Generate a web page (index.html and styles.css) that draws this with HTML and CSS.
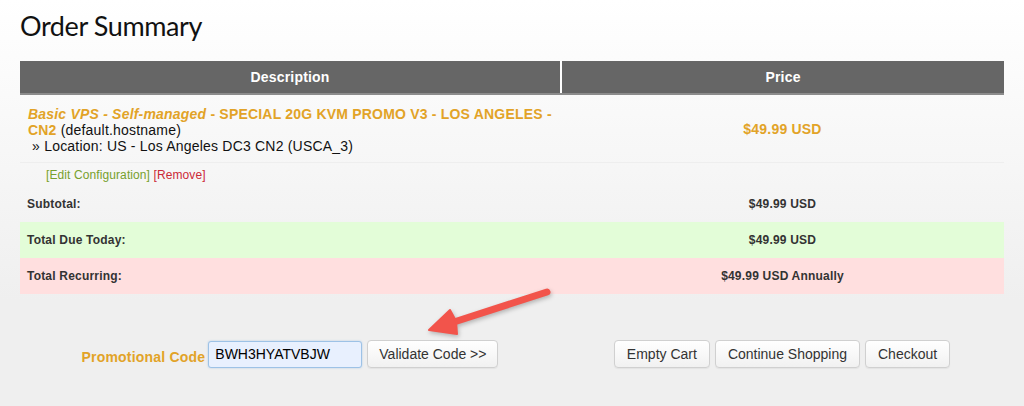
FILE: index.html
```html
<!DOCTYPE html>
<html lang="en">
<head>
    <meta charset="UTF-8">
    <title>Order Summary</title>
    <link rel="stylesheet" href="styles.css">
</head>
<body>
    <div class="page">
        <h1>Order Summary</h1>
        <table class="cart">
            <thead>
                <tr>
                    <th class="col-desc">Description</th>
                    <th class="col-price">Price</th>
                </tr>
            </thead>
            <tbody>
                <tr class="product">
                    <td class="desc">
                        <strong class="product-name"><em>Basic VPS - Self-managed</em> - SPECIAL 20G KVM PROMO V3 - LOS ANGELES - CN2</strong> (default.hostname)<br>
                        &nbsp;&raquo; Location: US - Los Angeles DC3 CN2 (USCA_3)
                    </td>
                    <td class="price product-price">$49.99 USD</td>
                </tr>
                <tr class="actions">
                    <td class="desc">
                        <a href="#" class="edit-link">[Edit Configuration]</a>
                        <a href="#" class="remove-link">[Remove]</a>
                    </td>
                    <td></td>
                </tr>
                <tr class="summary">
                    <td class="label">Subtotal:</td>
                    <td class="price">$49.99 USD</td>
                </tr>
                <tr class="summary due">
                    <td class="label">Total Due Today:</td>
                    <td class="price">$49.99 USD</td>
                </tr>
                <tr class="summary recurring">
                    <td class="label">Total Recurring:</td>
                    <td class="price">$49.99 USD Annually</td>
                </tr>
            </tbody>
        </table>

        <div class="cart-bottom">
            <form class="promo">
                <label for="promocode">Promotional Code</label>
                <input type="text" id="promocode" value="BWH3HYATVBJW">
                <button type="button">Validate Code &gt;&gt;</button>
            </form>
            <div class="cart-buttons">
                <button type="button">Empty Cart</button>
                <button type="button">Continue Shopping</button>
                <button type="button">Checkout</button>
            </div>

            <!-- annotation arrow -->
            <svg class="arrow" width="140" height="60" viewBox="0 0 140 60">
                <g fill="#f2544b" stroke="#f2544b">
                    <line x1="127" y1="8" x2="34" y2="38" stroke-width="7" stroke-linecap="round" />
                    <polygon points="9,46 30,26 36,37 37,50" stroke-width="2" stroke-linejoin="round" />
                </g>
            </svg>
        </div>
    </div>
</body>
</html>
```

FILE: styles.css
```css
html {
    background: #efefef;
}
body {
    margin: 0;
    font-family: 'Liberation Sans', Arial, sans-serif;
    font-size: 14px;
    letter-spacing: 0.2px;
    color: #222;
    background: linear-gradient(#ffffff 0, #f7f7f7 150px, #efefef 300px, #efefef 100%);
    min-height: 406px;
}
.page {
    padding: 0 20px;
}
h1 {
    font-family: 'Lato', sans-serif;
    font-weight: 400;
    font-size: 27px;
    color: #111;
    margin: 0;
    padding: 8px 0 0 0;
    height: 53px;
    line-height: 36px;
    letter-spacing: -0.4px;
}
.cart {
    width: 984px;
    border-collapse: collapse;
}
.cart th {
    background-color: #666;
    color: #fff;
    font-weight: bold;
    font-size: 14px;
    height: 32px;
    padding: 0;
    border-bottom: 2px solid #8c8c8c;
}
.cart .col-desc {
    width: 540px;
}
.cart .col-price {
    border-left: 2px solid #fff;
}
.cart td {
    padding: 0;
}
.product td {
    height: 65px;
    border-bottom: 1px solid #eeeeee;
}
.product .desc {
    padding: 2px 4px 0 8px;
    line-height: 16px;
    color: #111;
}
.product-name {
    color: #e2a327;
}
.product-price {
    color: #e2a327;
    font-weight: bold;
    font-size: 14px;
}
.price {
    text-align: center;
}
.actions td {
    height: 22px;
    font-size: 12px;
    letter-spacing: 0.1px;
}
.actions .desc {
    padding-left: 26px;
    padding-top: 1px;
}
.edit-link {
    color: #77a02c;
    text-decoration: none;
}
.remove-link {
    color: #cc2a36;
    text-decoration: none;
}
.summary td {
    font-size: 12px;
    font-weight: bold;
    color: #333;
    height: 36px;
}
.summary .label {
    padding-left: 7px;
}
.summary:first-of-type td {
    height: 38px;
}
.due td {
    background-color: #e3fdd8;
}
.recurring td {
    background-color: #ffdfdf;
}
.cart-bottom {
    position: relative;
    display: flex;
    width: 984px;
    padding-top: 46px;
}
.promo {
    width: 540px;
    display: flex;
    justify-content: center;
    align-items: center;
    gap: 5px;
    margin: 0;
    padding-left: 0;
}
.promo label {
    color: #e2a327;
    font-weight: bold;
    font-size: 14px;
    margin-top: 5px;
    margin-right: -2px;
}
.promo input {
    width: 154px;
    height: 27px;
    box-sizing: border-box;
    font-family: 'Liberation Sans', Arial, sans-serif;
    font-size: 14px;
    color: #000;
    padding: 0 6px;
    background-color: #e8f0fe;
    border: 1px solid #9dc2e6;
    border-radius: 3px;
    box-shadow: 0 0 2px rgba(80, 150, 220, 0.4);
}
.cart-buttons {
    width: 444px;
    display: flex;
    justify-content: center;
    gap: 5px;
}
button {
    height: 28px;
    padding: 0 12px;
    font-family: 'Liberation Sans', Arial, sans-serif;
    font-size: 14px;
    color: #333;
    background: linear-gradient(#ffffff, #f1f1f1);
    border: 1px solid #d0d0d0;
    border-radius: 4px;
    box-shadow: 0 1px 1px rgba(0, 0, 0, 0.05);
    cursor: pointer;
}
.promo button {
    padding: 0 11px;
}
.arrow {
    position: absolute;
    left: 400px;
    top: -10px;
    filter: drop-shadow(1px 2px 2px rgba(0, 0, 0, 0.25));
}
```
